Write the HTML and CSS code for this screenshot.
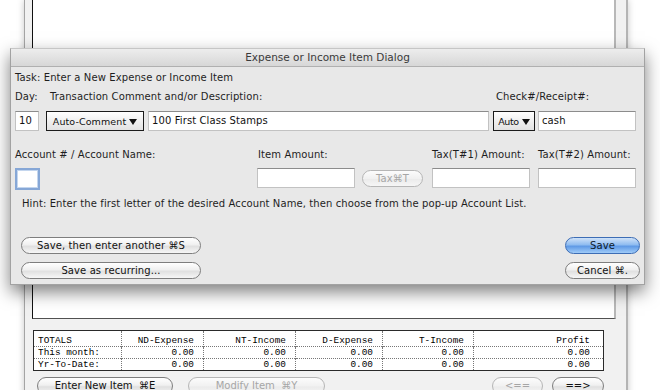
FILE: index.html
```html
<!DOCTYPE html>
<html lang="en">
<head>
    <meta charset="UTF-8">
    <title>Expense or Income Item Dialog</title>
    <link rel="stylesheet" href="styles.css">
</head>
<body>
    <div class="desktop">
        <div class="window">
            <div class="list"></div>

            <table class="totals">
                <colgroup>
                    <col style="width:88px"><col style="width:82px"><col style="width:92px">
                    <col style="width:87px"><col style="width:91px"><col style="width:130px">
                </colgroup>
                <tr class="head">
                    <td>TOTALS</td><td>ND-Expense</td><td>NT-Income</td><td>D-Expense</td><td>T-Income</td><td>Profit</td>
                </tr>
                <tr>
                    <td>This month:</td><td>0.00</td><td>0.00</td><td>0.00</td><td>0.00</td><td>0.00</td>
                </tr>
                <tr>
                    <td>Yr-To-Date:</td><td>0.00</td><td>0.00</td><td>0.00</td><td>0.00</td><td>0.00</td>
                </tr>
            </table>

            <div class="nav">
                <div class="pill nav-enter">Enter New Item &nbsp;⌘E</div>
                <div class="pill off nav-modify">Modify Item &nbsp;⌘Y</div>
                <div class="pill off nav-prev">&lt;==</div>
                <div class="pill nav-next">==&gt;</div>
            </div>
        </div>
    </div>

    <div class="dialog">
        <div class="titlebar">Expense or Income Item Dialog</div>
        <div class="dlg-body">
            <div class="task">Task: Enter a New Expense or Income Item</div>

            <div class="labels-1">
                <span class="l-day">Day:</span>
                <span class="l-desc">Transaction Comment and/or Description:</span>
                <span class="l-check">Check#/Receipt#:</span>
            </div>

            <div class="row-1">
                <div class="field f-day">10</div>
                <div class="popup f-comment">Auto-Comment<span class="arrow"></span></div>
                <div class="field f-desc">100 First Class Stamps</div>
                <div class="popup f-auto">Auto<span class="arrow"></span></div>
                <div class="field f-check">cash</div>
            </div>

            <div class="grid-2 labels-2">
                <span>Account # / Account Name:</span>
                <span>Item Amount:</span>
                <span></span>
                <span>Tax(T#1) Amount:</span>
                <span>Tax(T#2) Amount:</span>
            </div>

            <div class="grid-2 row-2">
                <div><div class="field focus"></div></div>
                <div class="field"></div>
                <div><div class="pill off tax-btn">Tax⌘T</div></div>
                <div><div class="field"></div></div>
                <div class="field"></div>
            </div>

            <div class="hint">Hint: Enter the first letter of the desired Account Name, then choose from the pop-up Account List.</div>

            <div class="actions">
                <div class="col-left">
                    <div class="pill wide">Save, then enter another ⌘S</div>
                    <div class="pill wide">Save as recurring...</div>
                </div>
                <div class="col-right">
                    <div class="pill default">Save</div>
                    <div class="pill">Cancel ⌘.</div>
                </div>
            </div>
        </div>
    </div>
</body>
</html>
```

FILE: styles.css
```css
* {
    box-sizing: border-box;
}
html, body {
    margin: 0;
    padding: 0;
}
body {
    width: 660px;
    height: 390px;
    overflow: hidden;
    position: relative;
    background: #fff;
    font-family: "DejaVu Sans", sans-serif;
    font-size: 10px;
    color: #1e1e1e;
}

/* window behind the dialog */
.desktop {
    height: 390px;
    padding-left: 24px;
}
.window {
    width: 604px;
    height: 400px;
    padding-left: 7px;
    background: #f1f1f1;
    border-left: 1px solid #a4a4a4;
    border-right: 2px solid #b4b4b4;
    box-shadow: 0 0 7px rgba(0, 0, 0, 0.22);
}
.list {
    width: 584px;
    height: 319px;
    background: #fff;
    border-left: 1px solid #111;
    border-right: 2px solid #b8b8b8;
    border-bottom: 1px solid #505050;
}

.totals {
    margin: 11px 0 0 1px;
    width: 571px;
    table-layout: fixed;
    border-collapse: collapse;
    border: 1px solid #2a2a2a;
    background: #fff;
    font-family: "Liberation Mono", monospace;
    font-size: 9.4px;
    color: #000;
}
.totals td {
    height: 12px;
    line-height: 11px;
    padding: 0 9px 0 4px;
    text-align: right;
    white-space: nowrap;
    border-left: 1px dotted #777;
    border-top: 1px dotted #777;
}
.totals td:first-child {
    text-align: left;
    border-left: none;
}
.totals td:last-child {
    padding-right: 13px;
}
.totals .head td {
    height: 16px;
    padding-top: 4px;
    border-top: none;
}

.nav {
    display: flex;
    margin-top: 6px;
    padding-left: 5px;
}
.nav-enter { width: 136px; }
.nav-modify { width: 137px; margin-left: 15px; }
.nav-prev { width: 51px; margin-left: 167px; }
.nav-next { width: 52px; margin-left: 9px; }

/* buttons */
.pill {
    height: 18px;
    line-height: 16px;
    border: 1px solid #7e7e7e;
    border-radius: 9px;
    background: linear-gradient(#ffffff, #f0f0f0 45%, #e0e0e0 55%, #f6f6f6);
    text-align: center;
    color: #111;
    white-space: nowrap;
}
.pill.off {
    color: #a6a6a6;
    border-color: #b6b6b6;
    background: linear-gradient(#fcfcfc, #f1f1f1 50%, #ebebeb 55%, #f6f6f6);
}
.pill.default {
    border-color: #3d6db5;
    background: linear-gradient(#cfe2f8, #8fbcf0 45%, #5f9ae6 55%, #9fcbf8);
    color: #0d1a2a;
}

/* dialog */
.dialog {
    position: absolute;
    left: 10px;
    top: 48px;
    width: 635px;
    height: 237px;
    background: #e8e8e8;
    border: 1px solid #a2a2a2;
    border-top-color: #c6c6c6;
    box-shadow: 0 7px 16px rgba(0, 0, 0, 0.5);
}
.titlebar {
    height: 18px;
    line-height: 17px;
    text-align: center;
    font-size: 10.5px;
    color: #3a3a3a;
    background: linear-gradient(#ededed, #d7d7d7);
    border-bottom: 1px solid #b0b0b0;
}
.dlg-body {
    padding: 4px 8px 0 4px;
    letter-spacing: 0.1px;
}
.task {
    height: 14px;
    line-height: 14px;
}

.labels-1 {
    display: flex;
    height: 14px;
    line-height: 14px;
    margin-top: 5px;
}
.l-day { width: 35px; }
.l-desc { flex: 1; }
.l-check { width: 140px; }

.field {
    height: 20px;
    line-height: 18px;
    padding-left: 3px;
    background: #fff;
    border: 1px solid #c2c2c2;
    border-top-color: #8c8c8c;
    color: #111;
}

.row-1 {
    display: flex;
    margin-top: 7px;
}
.f-day { width: 24px; }
.f-comment { width: 98px; margin-left: 7px; }
.f-desc { width: 341px; margin-left: 4px; }
.f-auto { width: 42px; margin-left: 4px; font-size: 9px; letter-spacing: -0.4px; }
.f-check { width: 98px; margin-left: 3px; }

.popup {
    height: 20px;
    line-height: 19px;
    border: 1px solid #1b1b1b;
    background: linear-gradient(#ffffff, #eeeeee 55%, #e2e2e2);
    text-align: center;
    font-size: 9.5px;
    color: #111;
}
.popup .arrow {
    display: inline-block;
    margin-left: 3px;
    border-left: 4.5px solid transparent;
    border-right: 4.5px solid transparent;
    border-top: 6px solid #111;
}

.grid-2 {
    display: grid;
    grid-template-columns: 242px 98px 77px 106px 98px;
}
.labels-2 {
    height: 14px;
    line-height: 14px;
    margin-top: 17px;
}
.labels-2 span:nth-child(2) { padding-left: 1px; }
.row-2 {
    margin-top: 6px;
    height: 22px;
}
.row-2 .field {
    width: 98px;
}
.row-2 .field.focus {
    width: 25px;
    height: 22px;
    border: 2px solid #86a7d6;
    box-shadow: inset 0 0 0 1px #c4d6ee;
}
.tax-btn {
    width: 61px;
    height: 17px;
    line-height: 15px;
    margin: 2px 0 0 7px;
}

.hint {
    height: 14px;
    line-height: 14px;
    margin-top: 7px;
    padding-left: 7px;
}

.actions {
    display: flex;
    justify-content: space-between;
    margin: 26px -4px 0 6px;
}
.col-left,
.col-right {
    display: flex;
    flex-direction: column;
    gap: 8px;
}
.col-left .pill {
    width: 180px;
    height: 17px;
    line-height: 15px;
}
.col-right .pill {
    width: 75px;
    height: 17px;
    line-height: 15px;
}
```
